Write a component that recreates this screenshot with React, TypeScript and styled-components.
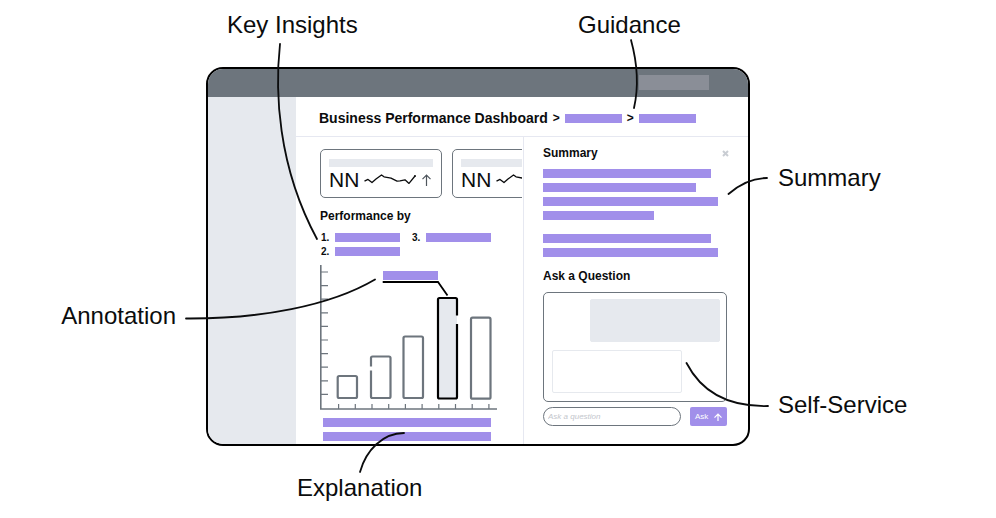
import React from "react";
import styled, { createGlobalStyle } from "styled-components";

const color = {
  ink: "#0b0c0d",
  slate: "#6d757d",
  badge: "#8a8e97",
  mist: "#e6e9ee",
  line: "#e6e8f1",
  violet: "#a18fea",
};

const GlobalStyle = createGlobalStyle`
  *, *::before, *::after { box-sizing: border-box; }
  body {
    margin: 0;
    background: #fff;
    color: ${color.ink};
    font-family: "Liberation Sans", Arial, sans-serif;
  }
`;

const Figure = styled.main`
  position: relative;
  display: grid;
  grid-template-columns: 206fr 544fr 246fr;
  grid-template-rows: auto auto auto;
  min-height: 100vh;
  align-content: start;
`;

const TopLabels = styled.div`
  grid-column: 1 / -1;
  display: grid;
  grid-template-columns: 227fr 351fr 418fr;
  padding: 11px 0 28px;
  & > :first-child { grid-column: 2; }
`;

const LeftLabels = styled.div`
  padding: 235px 30px 0 0;
  text-align: right;
`;

const RightLabels = styled.div`
  display: flex;
  flex-direction: column;
  gap: 199px;
  padding: 97px 0 0 28px;
`;

const BottomLabels = styled.div`
  grid-column: 1 / -1;
  display: grid;
  grid-template-columns: 297fr 699fr;
  padding-top: 28px;
  & > :first-child { grid-column: 2; }
`;

const Label = styled.div`
  font-size: 24px;
  line-height: 28px;
  white-space: nowrap;
`;

const Leaders = styled.svg`
  position: absolute;
  top: 0;
  left: 0;
  width: 100%;
  height: 518px;
  pointer-events: none;
  fill: none;
  stroke: ${color.ink};
  stroke-width: 1.8;
  stroke-linecap: round;
  path { vector-effect: non-scaling-stroke; }
`;

const Frame = styled.section`
  border: 2px solid #000;
  border-radius: 17px;
  overflow: hidden;
  background: #fff;
`;

const TopBar = styled.header`
  display: flex;
  justify-content: flex-end;
  padding: 6px 39px 7px;
  background: ${color.slate};
`;

const Badge = styled.div`
  width: 70px;
  height: 15px;
  background: ${color.badge};
`;

const Shell = styled.div`
  display: grid;
  grid-template-columns: 88fr 452fr;
`;

const Sidebar = styled.aside`
  background: ${color.mist};
`;

const Content = styled.div`
  min-width: 0;
`;

const Breadcrumb = styled.nav`
  display: flex;
  align-items: center;
  gap: 5px;
  padding: 13px 23px 10px;
  border-bottom: 1px solid ${color.line};
  line-height: 16px;
`;

const Title = styled.h1`
  margin: 0;
  font-size: 14px;
  line-height: 16px;
  white-space: nowrap;
`;

const Chevron = styled.span`
  font-size: 12px;
  font-weight: 700;
`;

const Bar = styled.div<{ $w?: string }>`
  width: ${(p) => p.$w ?? "100%"};
  height: 9px;
  background: ${color.violet};
`;

const Panels = styled.div`
  display: grid;
  grid-template-columns: 227fr 225fr;
`;

const MainPanel = styled.section`
  min-width: 0;
  padding: 12px 1px 3px 24px;
`;

const Cards = styled.div`
  display: flex;
  gap: 10px;
  overflow: hidden;
`;

const Card = styled.article`
  flex: 0 0 122px;
  height: 49px;
  padding: 9px 8px 0;
  border: 1px solid ${color.slate};
  border-radius: 5px;
`;

const CardTitle = styled.div`
  height: 8px;
  background: ${color.mist};
`;

const Metric = styled.div`
  display: flex;
  align-items: center;
  gap: 5px;
  height: 25px;
`;

const Value = styled.span`
  font-size: 21px;
  line-height: 24px;
`;

const Heading = styled.h2`
  margin: 0;
  font-size: 12px;
  line-height: 14px;
`;

const Section = styled.div`
  padding-top: 11px;
`;

const Insights = styled.ol`
  display: grid;
  grid-template-rows: 9px 9px;
  grid-auto-flow: column;
  justify-content: start;
  gap: 5px 12px;
  margin: 0;
  padding: 10px 0 9px 1px;
  list-style: none;
`;

const Insight = styled.li`
  display: grid;
  grid-template-columns: 14px 65px;
  font-size: 10px;
  font-weight: 700;
  line-height: 9px;
`;

const Chart = styled.svg`
  display: block;
  fill: none;
  stroke: ${color.slate};
  stroke-width: 2.2;
`;

const Lines = styled.div<{ $top: number; $inset?: number }>`
  display: grid;
  gap: 5px;
  padding: ${(p) => p.$top}px 0 0 ${(p) => p.$inset ?? 0}px;
`;

const SidePanel = styled.section`
  padding: 9px 21px 18px 19px;
  border-left: 1px solid ${color.line};
`;

const PanelHead = styled.div`
  display: flex;
  align-items: center;
  justify-content: space-between;
  height: 14px;
`;

const CloseButton = styled.button`
  display: flex;
  padding: 0;
  margin-right: -2px;
  border: 0;
  background: none;
  color: #c9cdd3;
`;

const Question = styled.form`
  margin: 0;
  padding-top: 12px;
`;

const Thread = styled.div`
  display: flex;
  flex-direction: column;
  gap: 8px;
  height: 110px;
  margin: 9px 0 5px;
  padding: 6px;
  border: 1px solid ${color.slate};
  border-radius: 5px;
`;

const Bubble = styled.div<{ $mine?: boolean }>`
  width: 130px;
  height: 43px;
  margin: 0 0 0 2px;
  align-self: ${(p) => (p.$mine ? "flex-end" : "flex-start")};
  border: 1px solid ${color.mist};
  border-radius: 2px;
  background: ${(p) => (p.$mine ? color.mist : "#fff")};
`;

const AskRow = styled.div`
  display: flex;
  gap: 9px;
`;

const AskInput = styled.input`
  flex: 1;
  min-width: 0;
  height: 19px;
  padding: 0 4px;
  border: 1px solid ${color.slate};
  border-radius: 10px;
  background: #fff;
  font: italic 8px "Liberation Sans", Arial, sans-serif;
  &::placeholder { color: #c3c6cc; opacity: 1; }
`;

const AskButton = styled.button`
  display: flex;
  align-items: center;
  justify-content: space-between;
  width: 37px;
  height: 19px;
  padding: 0 5px;
  border: 0;
  border-radius: 2px;
  background: ${color.violet};
  color: #fff;
  font: 8px "Liberation Sans", Arial, sans-serif;
`;

function UpArrow({ w, h, stroke = "currentColor" }: { w: number; h: number; stroke?: string }) {
  return (
    <svg width={w} height={h} viewBox={`0 0 ${w} ${h}`} fill="none" stroke={stroke} strokeWidth="1.2" aria-hidden="true">
      <path d={`M${w / 2} ${h}V1M0.5 ${w / 2 + 0.6}L${w / 2} 1L${w - 0.5} ${w / 2 + 0.6}`} />
    </svg>
  );
}

function MetricCard() {
  return (
    <Card>
      <CardTitle />
      <Metric>
        <Value>NN</Value>
        <svg width="53" height="12" viewBox="0 0 53 12" fill="none" stroke={color.ink} strokeWidth="1.3" strokeLinejoin="round" aria-hidden="true">
          <path d="M0.5 7.2L4 5.4L8 8.6L12 5L17.5 0.9L20 2.8L27 4.2L33 7.2L36 6.9L41 5.8L45 9.4L51 2" />
          <circle cx="51" cy="2" r="1" fill={color.ink} stroke="none" />
        </svg>
        <UpArrow w={9} h={12} stroke="#4f565d" />
      </Metric>
    </Card>
  );
}

const yTicks = Array.from({ length: 10 }, (_, i) => 272 + i * 13.6);
const xTicks = Array.from({ length: 10 }, (_, i) => 338.6 + i * 16.7);

function PerformanceChart() {
  return (
    <Chart width="177" height="146" viewBox="320 265 177 146" role="img" aria-label="Performance bar chart">
      <path d="M320.8 265V409H497" strokeWidth="1.6" />
      <path strokeWidth="1.2" d={yTicks.map((y) => `M321 ${y}h7`).join("")} />
      <path strokeWidth="1.2" d={xTicks.map((x) => `M${x} 404v5`).join("")} />
      <rect x="337.7" y="376" width="19.3" height="22" rx="1.5" />
      <path d="M371 366.5V358q0-1.5 1.5-1.5H389q1.5 0 1.5 1.5V396.5q0 1.5-1.5 1.5H372.5q-1.5 0-1.5-1.5V370.5" />
      <rect x="403.5" y="336.5" width="19.5" height="61.5" rx="1.5" />
      <rect x="471" y="317.7" width="19.5" height="81" rx="1.5" />
      <path d="M438 298H457V398.5H438Z" fill={color.mist} stroke="none" />
      <path
        stroke="#000"
        d="M457 315.5V299.5q0-1.5-1.5-1.5H439.5q-1.5 0-1.5 1.5V397q0 1.5 1.5 1.5H455.5q1.5 0 1.5-1.5V324"
      />
      <rect x="383" y="271" width="55" height="9" fill={color.violet} stroke="none" />
      <path d="M382.7 282H438L447.5 295.5" stroke="#000" strokeWidth="1.8" />
    </Chart>
  );
}

function Callouts() {
  return (
    <Leaders viewBox="0 0 996 518" preserveAspectRatio="none" aria-hidden="true">
      <path d="M280 44C275 90 277 165 317 239" />
      <path d="M631 40C637 62 639 86 634 108" />
      <path d="M186 318.5C260 319 330 306 375 279.5" />
      <path d="M728.5 194C741 183 753 178 767 178" />
      <path d="M686.5 363C702 393 730 407 768 406" />
      <path d="M360 472C366 450 383 433 404 433" />
    </Leaders>
  );
}

export default function App() {
  return (
    <>
      <GlobalStyle />
      <Figure>
        <TopLabels>
          <Label>Key Insights</Label>
          <Label>Guidance</Label>
        </TopLabels>
        <LeftLabels>
          <Label>Annotation</Label>
        </LeftLabels>
        <Frame>
          <TopBar>
            <Badge />
          </TopBar>
          <Shell>
            <Sidebar />
            <Content>
              <Breadcrumb aria-label="Breadcrumb">
                <Title>Business Performance Dashboard</Title>
                <Chevron>&gt;</Chevron>
                <Bar $w="57px" />
                <Chevron>&gt;</Chevron>
                <Bar $w="57px" />
              </Breadcrumb>
              <Panels>
                <MainPanel>
                  <Cards>
                    <MetricCard />
                    <MetricCard />
                  </Cards>
                  <Section>
                    <Heading>Performance by</Heading>
                    <Insights>
                      {["1.", "2.", "3."].map((n) => (
                        <Insight key={n}>
                          {n}
                          <Bar />
                        </Insight>
                      ))}
                    </Insights>
                    <PerformanceChart />
                    <Lines $top={7} $inset={3}>
                      <Bar $w="168px" />
                      <Bar $w="168px" />
                    </Lines>
                  </Section>
                </MainPanel>
                <SidePanel>
                  <PanelHead>
                    <Heading>Summary</Heading>
                    <CloseButton type="button" aria-label="Close summary">
                      <svg width="7" height="7" viewBox="0 0 7 7" stroke="currentColor" strokeWidth="2" aria-hidden="true">
                        <path d="M1 1L6 6M6 1L1 6" />
                      </svg>
                    </CloseButton>
                  </PanelHead>
                  <Lines $top={9}>
                    <Bar $w="168px" />
                    <Bar $w="153px" />
                    <Bar $w="175px" />
                    <Bar $w="111px" />
                  </Lines>
                  <Lines $top={14}>
                    <Bar $w="168px" />
                    <Bar $w="175px" />
                  </Lines>
                  <Question onSubmit={(e) => e.preventDefault()}>
                    <Heading>Ask a Question</Heading>
                    <Thread>
                      <Bubble $mine />
                      <Bubble />
                    </Thread>
                    <AskRow>
                      <AskInput type="text" aria-label="Ask a question" placeholder="Ask a question" />
                      <AskButton type="submit">
                        Ask
                        <UpArrow w={8} h={8} />
                      </AskButton>
                    </AskRow>
                  </Question>
                </SidePanel>
              </Panels>
            </Content>
          </Shell>
        </Frame>
        <RightLabels>
          <Label>Summary</Label>
          <Label>Self-Service</Label>
        </RightLabels>
        <BottomLabels>
          <Label>Explanation</Label>
        </BottomLabels>
        <Callouts />
      </Figure>
    </>
  );
}
